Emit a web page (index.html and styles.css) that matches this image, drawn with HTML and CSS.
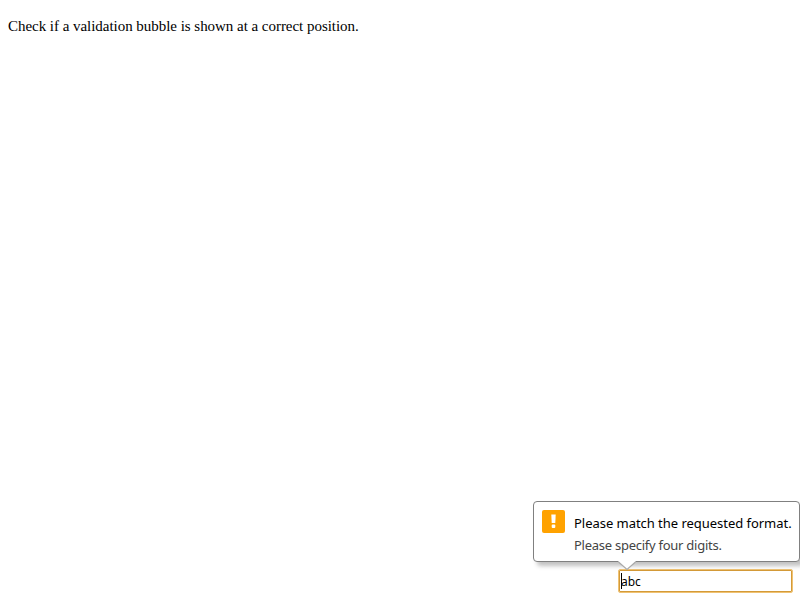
FILE: index.html
```html
<!DOCTYPE html>
<html lang="en">
<head>
<meta charset="utf-8">
<title>Validation bubble position</title>
<link rel="stylesheet" href="styles.css">
</head>
<body>
<p class="description">Check if a validation bubble is shown at a correct position.</p>
<div class="field">
  <div class="control"><span class="caret"></span><span class="value">abc</span></div>
  <div class="bubble" role="alert">
    <div class="icon">
      <svg width="23" height="23" viewBox="0 0 23 23"><path fill="#fff" d="M9.3 4.5h4.4L13.3 13H9.7z"/><rect x="9.7" y="14.6" width="3.6" height="3.4" rx="1" fill="#fff"/></svg>
    </div>
    <div class="text">
      <div class="message">Please match the requested format.</div>
      <div class="hint">Please specify four digits.</div>
    </div>
    <svg class="arrow" width="20" height="10" viewBox="0 0 20 10"><path fill="#fff" d="M1 0L10 8.5 19 0z"/><path fill="none" stroke="#aaa" stroke-width="1.2" d="M1.5 1L10 8.5 18.5 1"/></svg>
  </div>
</div>
</body>
</html>
```
FILE: styles.css
```css
* {
  box-sizing: border-box;
}

body {
  display: flex;
  flex-direction: column;
  justify-content: space-between;
  height: 600px;
  margin: 0;
  padding: 16px 7px 7px 8px;
  overflow: hidden;
  background: #fff;
  color: #000;
  font-family: "Liberation Serif", serif;
}

.description {
  margin: 0;
  font-size: 15px;
  line-height: 20px;
  letter-spacing: -0.035px;
  white-space: nowrap;
}

.field {
  position: relative;
  align-self: flex-end;
  width: 175px;
}

.control {
  display: flex;
  align-items: center;
  height: 24px;
  padding-left: 1px;
  border: 1px solid #efc273;
  border-radius: 2px;
  background: #fff;
  box-shadow: inset 0 0 0 1px #d49a38;
  font: 12px/18px "Noto Sans", sans-serif;
}

.caret {
  width: 1px;
  height: 16px;
  margin-left: 1px;
  background: #000;
}

.value {
  padding-top: 2px;
  margin-left: -1px;
}

.bubble {
  position: absolute;
  right: -7px;
  bottom: 31px;
  display: flex;
  gap: 9px;
  width: 267px;
  height: 61px;
  padding: 8px;
  border: 1px solid #808080;
  border-radius: 4px;
  background: #fff;
  box-shadow: 4px 4px 4px rgba(100, 100, 100, 0.4);
  font: 13px/22px "Noto Sans", sans-serif;
  white-space: nowrap;
}

.icon {
  width: 23px;
  height: 23px;
  border-radius: 2px;
  background: #ffa200;
}

.icon svg {
  display: block;
}

.text {
  padding-top: 2px;
}

.message {
  letter-spacing: -0.035px;
}

.hint {
  color: #444;
  letter-spacing: -0.26px;
}

.arrow {
  position: absolute;
  left: 83px;
  top: 59px;
}
```
